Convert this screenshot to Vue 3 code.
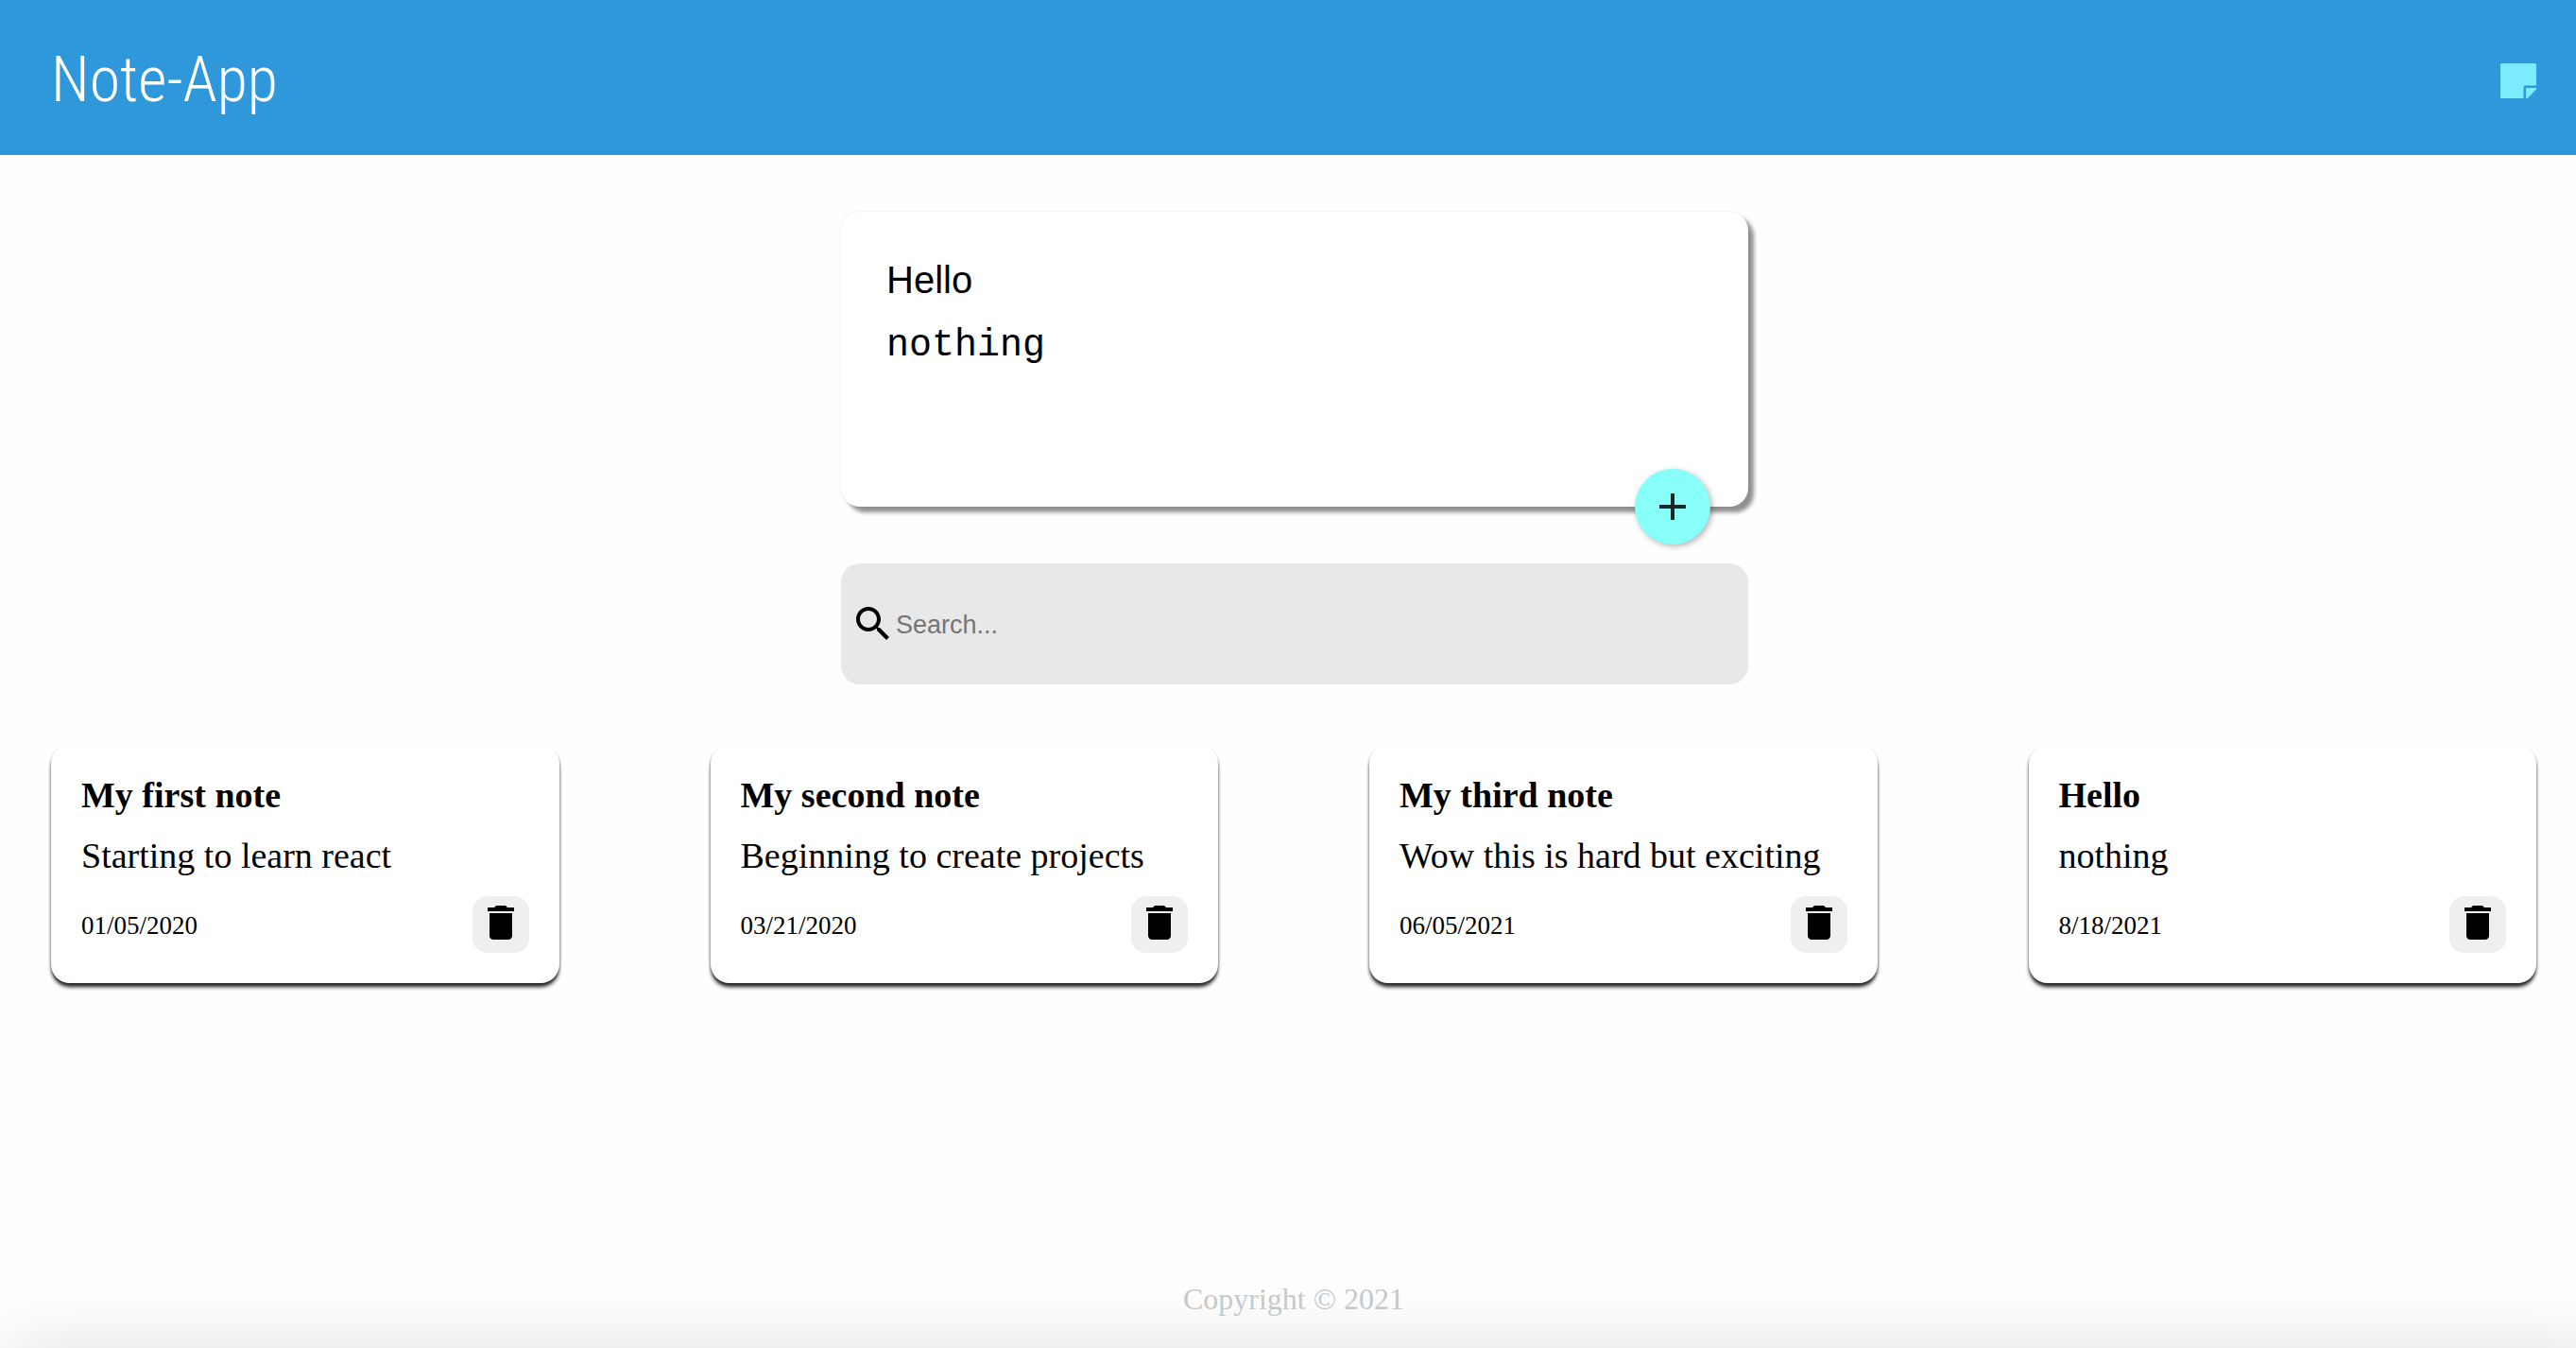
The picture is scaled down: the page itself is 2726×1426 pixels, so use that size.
<script setup>
import { ref, computed } from 'vue'

const title = ref('Hello')
const content = ref('nothing')
const query = ref('')
const notes = ref([
  { id: 1, title: 'My first note', text: 'Starting to learn react', date: '01/05/2020' },
  { id: 2, title: 'My second note', text: 'Beginning to create projects', date: '03/21/2020' },
  { id: 3, title: 'My third note', text: 'Wow this is hard but exciting', date: '06/05/2021' },
  { id: 4, title: 'Hello', text: 'nothing', date: '8/18/2021' },
])

const visibleNotes = computed(() =>
  notes.value.filter((n) => n.text.toLowerCase().includes(query.value.toLowerCase())),
)

function addNote() {
  if (!content.value.trim()) return
  notes.value.push({
    id: Date.now(),
    title: title.value,
    text: content.value,
    date: new Date().toLocaleDateString('en-US'),
  })
}

function removeNote(id) {
  notes.value = notes.value.filter((n) => n.id !== id)
}
</script>

<template>
  <div class="page">
    <header class="header">
      <h1 class="brand">Note-App</h1>
      <svg class="brand-icon" viewBox="0 0 38 37" aria-hidden="true">
        <path d="M1.5 0h35Q38 0 38 1.500V23.500H26.500Q24.500 23.500 24.500 25.500V37H1.500Q0 37 0 35.500V1.500Q0 0 1.500 0z" />
        <path d="M27 26h11v1.500L28.500 37H27z" />
      </svg>
    </header>

    <main class="main">
      <form class="composer" @submit.prevent="addNote">
        <input v-model="title" class="composer-title" type="text" aria-label="Title" />
        <textarea v-model="content" class="composer-text" rows="3" aria-label="Note"></textarea>
        <button class="add" type="submit" aria-label="Add note">
          <svg class="icon" viewBox="0 0 24 24"><path d="M19 13h-6v6h-2v-6H5v-2h6V5h2v6h6v2z" /></svg>
        </button>
      </form>

      <label class="search">
        <svg class="icon" viewBox="0 0 24 24" aria-hidden="true">
          <path d="M15.500 14h-.79l-.28-.27C15.410 12.590 16 11.110 16 9.500 16 5.910 13.090 3 9.500 3S3 5.910 3 9.500 5.910 16 9.500 16c1.610 0 3.090-.59 4.230-1.570l.27.28v.79l5 4.990L20.490 19l-4.990-5zm-6 0C7.010 14 5 11.990 5 9.500S7.010 5 9.500 5 14 7.010 14 9.500 11.990 14 9.500 14z" />
        </svg>
        <input v-model="query" class="search-input" type="text" placeholder="Search..." aria-label="Search notes" />
      </label>

      <section class="notes">
        <article v-for="note in visibleNotes" :key="note.id" class="note">
          <h2 class="note-title">{{ note.title }}</h2>
          <p class="note-text">{{ note.text }}</p>
          <div class="note-footer">
            <small class="note-date">{{ note.date }}</small>
            <button class="delete" type="button" aria-label="Delete note" @click="removeNote(note.id)">
              <svg class="icon" viewBox="0 0 24 24">
                <path d="M6 19c0 1.100.9 2 2 2h8c1.100 0 2-.9 2-2V7H6v12zM19 4h-3.500l-1-1h-5l-1 1H5v2h14V4z" />
              </svg>
            </button>
          </div>
        </article>
      </section>
    </main>

    <footer class="footer">
      <p class="copyright">Copyright © 2021</p>
    </footer>
  </div>
</template>

<style>
body {
  margin: 0;
  background: #fefefe;
}
</style>

<style scoped>
.page {
  display: flex;
  flex-direction: column;
  min-height: 100vh;
  overflow: hidden;
  font-family: "Liberation Serif", "Times New Roman", serif;
  color: #000;
}

.header {
  display: flex;
  align-items: center;
  justify-content: space-between;
  box-sizing: border-box;
  height: 164px;
  padding: 6px 42px 0 54px;
  background: #2f98da;
}

.brand {
  margin: 0;
  font-family: "Roboto Condensed", "Roboto", sans-serif;
  font-size: 66px;
  font-weight: 300;
  line-height: 80px;
  color: #fff;
}

.brand-icon {
  width: 38px;
  height: 37px;
  fill: #7debff;
}

.main {
  flex: 1;
  padding: 60px 40px 0 54px;
}

.composer {
  position: relative;
  display: flex;
  flex-direction: column;
  box-sizing: border-box;
  max-width: 960px;
  height: 312px;
  margin: 0 auto 60px;
  padding: 48px;
  border-radius: 20px;
  background: #fff;
  box-shadow: 6px 6px 4px #909090, 0 0 2px #ddd;
}

.composer-title,
.composer-text {
  padding: 0;
  border: 0;
  outline: 0;
  background: transparent;
  color: #000;
  font-size: 40px;
  resize: none;
}

.composer-title {
  height: 48px;
  margin-bottom: 22px;
  font-family: "Liberation Sans", Arial, sans-serif;
}

.composer-text {
  font-family: "Liberation Mono", "Courier New", monospace;
  line-height: 48px;
}

.add {
  position: absolute;
  right: 40px;
  bottom: -40px;
  display: flex;
  align-items: center;
  justify-content: center;
  width: 80px;
  height: 80px;
  padding: 0;
  border: 0;
  border-radius: 50%;
  background: #88fff8;
  color: #1a2a29;
  box-shadow: 2px 2px 6px rgba(0, 0, 0, 0.3);
}

.icon {
  flex: none;
  width: 48px;
  height: 48px;
  fill: currentColor;
}

.search {
  display: flex;
  align-items: center;
  box-sizing: border-box;
  max-width: 960px;
  height: 128px;
  margin: 0 auto 64px;
  padding: 0 10px;
  border-radius: 20px;
  background: #e8e8e8;
}

.search-input {
  flex: 1;
  min-width: 0;
  padding: 2px 0 0;
  border: 0;
  outline: 0;
  background: transparent;
  font-family: "Liberation Sans", Arial, sans-serif;
  font-size: 27px;
}

.search-input::placeholder {
  color: #757575;
}

.notes {
  display: grid;
  grid-template-columns: repeat(4, 1fr);
  gap: 64px 160px;
  padding-right: 2px;
}

.note {
  padding: 31px 32px 32px;
  border-radius: 20px;
  background: #fff;
  box-shadow: 0 5px 4px -1px #222, 0 2px 3px #999;
}

.note-title,
.note-text {
  margin: 0 0 20px;
  font-size: 38px;
  line-height: 44px;
}

.note-footer {
  display: flex;
  align-items: center;
  justify-content: space-between;
  padding-top: 1px;
}

.note-date {
  padding-top: 2px;
  font-size: 27px;
}

.delete {
  display: flex;
  align-items: flex-start;
  justify-content: center;
  width: 60px;
  height: 60px;
  padding: 4px 0 0;
  border: 0;
  border-radius: 16px;
  background: #efefef;
  color: #000;
}

.footer {
  padding-bottom: 32px;
  text-align: center;
}

.footer::after {
  content: "";
  position: absolute;
  left: 50px;
  right: 10px;
  top: 100vh;
  height: 0;
  box-shadow: 0 40px 76px 38px #dedede;
}

.copyright {
  position: relative;
  z-index: 1;
  margin: 0;
  padding: 0 42px 0 54px;
  font-size: 32px;
  line-height: 40px;
  color: #c8c8c8;
}
</style>
